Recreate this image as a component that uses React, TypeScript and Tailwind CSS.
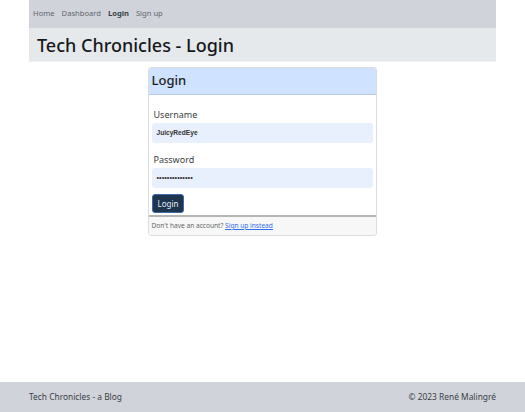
import React from "react";

export default function App() {
  return (
    <div
      className="min-h-screen flex flex-col bg-white text-[#212529]"
      style={{ fontFamily: '"Noto Sans", "Open Sans", sans-serif' }}
    >
      <div className="mx-[29px] w-[467px]">
        <nav className="h-[28px] bg-[#d0d4da] flex items-center gap-[7px] px-[4px] text-[7.6px] text-[#60666d]">
          <span>Home</span>
          <span>Dashboard</span>
          <span className="font-bold text-[#3a3f44]">Login</span>
          <span>Sign up</span>
        </nav>
        <header className="h-[34px] bg-[#e6e9ec] flex items-center px-[8px] border-b border-[#edf0f2]">
          <h1 className="text-[18px] font-medium text-[#16191c] leading-none">Tech Chronicles - Login</h1>
        </header>
      </div>
      <main className="flex-1 flex justify-center pt-[5px]">
        <div className="w-[229px] ml-[-1px] border border-[#dadde0] rounded-[3px] overflow-hidden flex flex-col self-start">
          <div className="h-[27px] bg-[#cfe2ff] border-b border-[#b8c8df] flex items-center px-[3px]">
            <span className="text-[13px] font-medium text-[#1a1d20]">Login</span>
          </div>
          <div className="bg-white px-[3px] pt-[13px] pb-[2px] flex flex-col">
            <label className="text-[9px] text-[#3a3f44] px-[2px] leading-[14px]">Username</label>
            <div className="mt-[1px] h-[20px] rounded-[3px] bg-[#e8f0fe] flex items-center px-[5px] text-[6.6px] font-bold text-[#333]" style={{ fontFamily: '"Liberation Sans", Arial, sans-serif' }}>
              JuicyRedEye
            </div>
            <label className="mt-[10px] text-[9px] text-[#3a3f44] px-[2px] leading-[14px]">Password</label>
            <div className="mt-[1px] h-[20px] rounded-[3px] bg-[#e8f0fe] flex items-center px-[5px] text-[7.4px] text-[#333]" style={{ fontFamily: '"Liberation Sans", Arial, sans-serif' }}>
              ••••••••••••••
            </div>
            <div className="mt-[6px] flex">
              <button className="h-[19px] px-[5px] rounded-[3px] bg-[#1e3550] border border-[#3d6aa8] text-[8px] text-[#e6ebf0] leading-none">
                Login
              </button>
            </div>
          </div>
          <div className="h-[20px] border-t-2 border-[#b5b5b5] bg-[#f7f7f7] flex items-center px-[3px] text-[6.6px] text-[#666]">
            <span>
              Don't have an account?{" "}
              <a className="text-[#2f6ef0] underline" href="#">Sign up instead</a>
            </span>
          </div>
        </div>
      </main>
      <footer className="h-[30px] bg-[#d0d4da] flex items-center justify-between px-[29px] text-[8.4px] text-[#3a3f44]">
        <span>Tech Chronicles - a Blog</span>
        <span>© 2023 René Malingré</span>
      </footer>
    </div>
  );
}
